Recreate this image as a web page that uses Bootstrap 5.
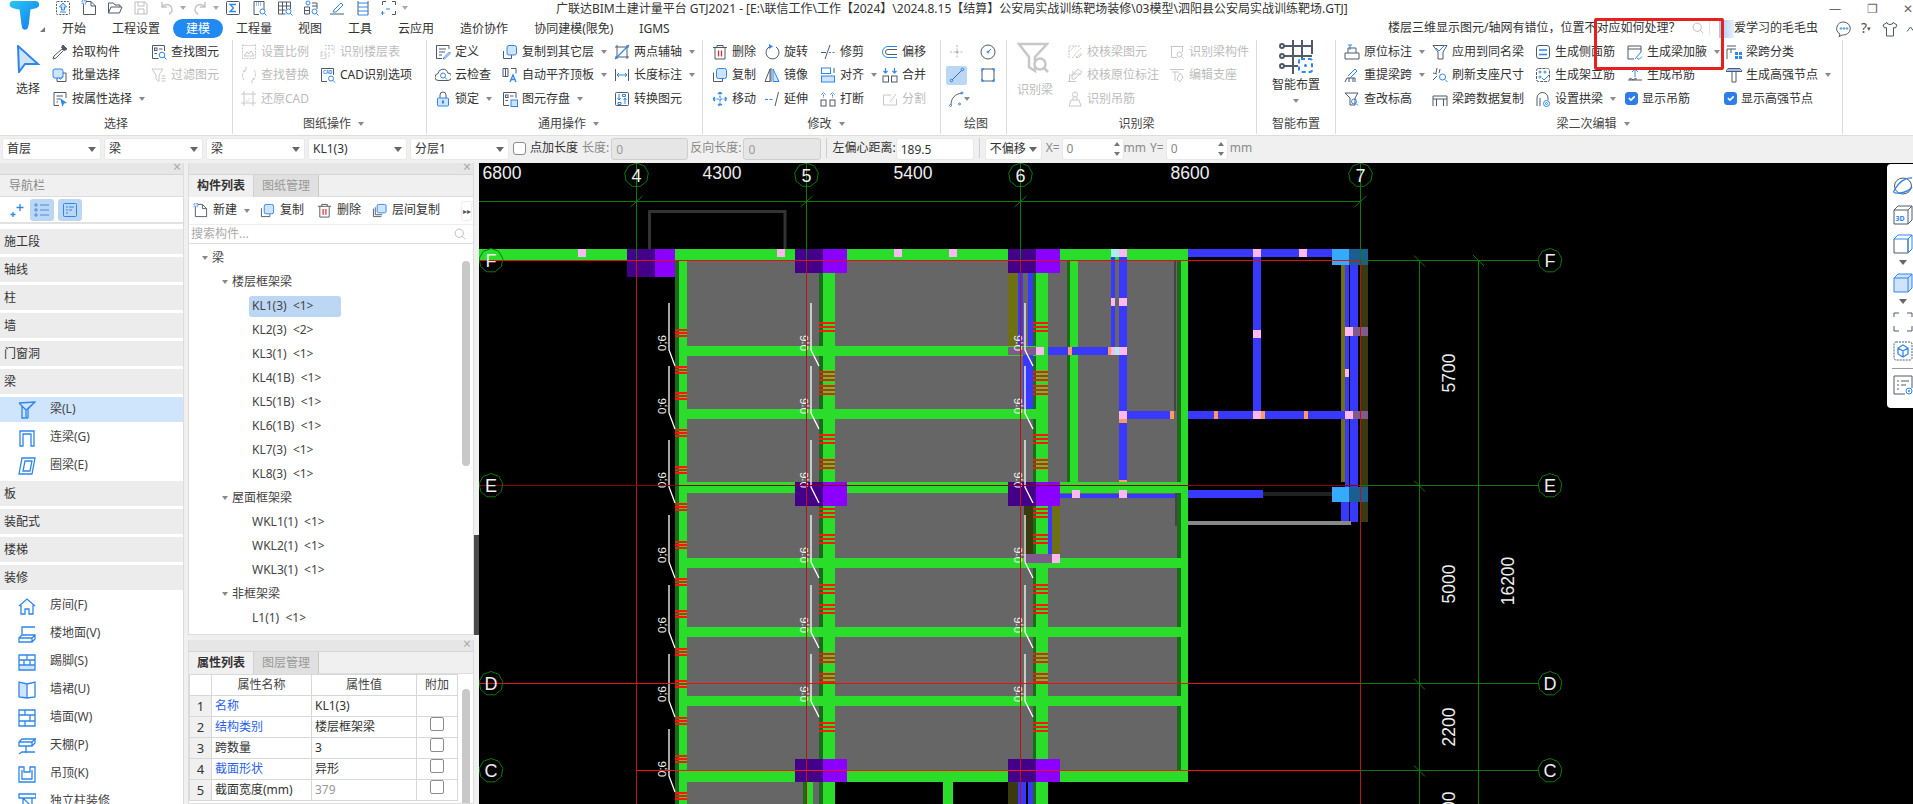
<!DOCTYPE html>
<html lang="zh-CN">
<head>
<meta charset="UTF-8">
<title>广联达BIM土建计量平台 GTJ2021</title>
<link href="https://cdn.jsdelivr.net/npm/bootstrap@5.3.0/dist/css/bootstrap.min.css" rel="stylesheet">
<style>
body{width:1913px;height:804px;overflow:hidden;background:#f0f0f0;font-family:"Noto Sans","Noto Sans CJK SC",sans-serif;font-size:12px;color:#333;line-height:1.2}
.ic{width:16px;height:16px;flex:none;margin-right:4px;fill:none;stroke:var(--base,#4f5b68);stroke-width:1;overflow:visible}
.a{stroke:var(--acc,#2f86ea)}
.af{fill:var(--accf,#cfe3fb);stroke:var(--acc,#2f86ea)}
.r{stroke:#e02b2b}
.dis{--base:#c8c8c8;--acc:#c8c8c8;--accf:#efefef;color:#bcbcbc}
.car{display:inline-block;flex:none;width:0;height:0;border:3.5px solid transparent;border-top:4px solid #8a8a8a;border-bottom:0;margin-left:7px}
/* header */
.app-head{height:38px;background:#fff}
.logo-box{width:49px;position:relative;flex:none}
.logo-box i{position:absolute;left:40px;top:27px;width:0;height:0;border-left:5px solid transparent;border-bottom:5px solid #777}
.t-row{height:19px}
.quick{width:507px;padding-left:6px;margin-top:-3px;flex:none}
.quick .ic{margin-right:10px}
.quick .car{margin:0 6px 0 -5px;border-top-color:#aaa}
.win-ctl{margin-left:auto;width:84px;color:#666}
.tab-it{padding:0 13px;height:19px;line-height:19px;border-radius:10px;color:#333}
.tab-it.on{background:#2089f2;color:#fff}
.srch{width:322px;height:14px;background:#fff;border-right:1px solid #e6e6e6;white-space:nowrap;position:relative;margin-top:2px;line-height:14px}
.srch svg{position:absolute;right:5px;top:1px;width:12px;height:12px;margin:0;stroke:#aaa}
.who{margin-left:9px;width:100px;white-space:nowrap}
.avatar{width:15px;height:18px;background:linear-gradient(90deg,#a5c9f2,#e8f1fb);flex:none}
.hd-tools{margin-left:17px;width:77px;overflow:hidden;flex:none;color:#555}
.hd-tools .ic{margin-right:9px}
.hd-q{width:21px;flex:none;font-size:14px}
.hd-q small{font-size:7px;vertical-align:middle}
.hd-up{width:7px;height:6px;flex:none;margin:0}
/* ribbon */
.ribbon{height:98px;background:#fff;border-bottom:1px solid #ddd;padding-top:2px}
.grp{flex:none;display:flex;flex-direction:column;height:94px;border-right:1px solid #dcdcdc}
.grp-body{height:71px;display:flex}
.grp-lbl{height:23px;line-height:23px;text-align:center;color:#444;display:flex;align-items:center;justify-content:center;padding-top:2px}
.rb-col{display:flex;flex-direction:column;flex:none}
.rb-it{height:23.5px;display:flex;align-items:center;white-space:nowrap}
.rb-big{text-align:center;flex:none}
.rb-big svg{display:block}
.g1{width:233px}.g2{width:194px;padding-left:8px}.g3{width:276px;padding-left:8px}.g4{width:238px;padding-left:9px}.g5{width:66px;padding-left:5px}.g6{width:250px;padding-left:10px}.g7{width:79px}.g8{width:507px;padding-left:8px}
.w52{width:52px}.w56{width:56px}.w62{width:62px}.w67{width:67px}.w79{width:79px}.w88{width:88px}.w92{width:92px}.w99{width:99px}.w102{width:102px}.w103{width:103px}.w112{width:112px}.w50{width:50px}.w31{width:31px}
.sel-big{display:block;margin:5px 0 0 16px;width:24px;height:28px}
.big-cap{display:block;margin:9px 0 0 16px;text-align:left}
.ocr-big{display:block;width:32px;height:33px;margin:2px 0 0 0}
.draw-cell{width:21px;height:19px;display:flex;align-items:center;justify-content:center;margin:2.25px 0;border-radius:2px;position:relative}
.draw-cell .ic{margin:0}
.draw-cell.sel{background:#bcd7f3}
.draw-cell .car{position:absolute;left:18px;top:8px;margin:0}
.ck-box{width:13px;height:13px;margin:0 4px 0 -2px;border-radius:2px;border-color:#2f7ee8;flex:none;float:none}
.form-check-input:checked.ck-box{background-color:#2f7ee8;border-color:#2f7ee8}
/* attribute bar */
.attr-bar{height:27px;background:#f0f0f0;padding:2px 0 0 2px}
.attr-bar .form-select,.attr-bar .form-control{height:22px;min-height:22px;padding:0 4px;font-size:12px;line-height:20px;border-radius:3px;border:1px solid #e8e8e8;color:#333;box-shadow:none}
.attr-bar .form-select{background-size:8px 5px;background-position:right 4px center;padding-right:14px;background-image:url("data:image/svg+xml,%3csvg xmlns='http://www.w3.org/2000/svg' viewBox='0 0 8 5'%3e%3cpath fill='%23666' d='M0 0h8L4 5z'/%3e%3c/svg%3e")}
.attr-bar .form-control:disabled{background:#e6e6e6;border-color:#cfcfcf;color:#999}
.attr-bar .lbl{white-space:nowrap;flex:none;margin-top:3px}
.attr-bar .gl2{margin-left:2px}
.attr-bar .gl4{margin-left:4px}
.s99{width:99px;margin-right:3px;flex:none}
.i77{width:77px;flex:none}.i78{width:78px;flex:none}
.w57{width:57px;flex:none}
.ab-ck{width:13px;height:13px;margin:4px 4px 0 1px;border-radius:2px;flex:none;border-color:#8c8c8c}
.ab-sep{width:1px;height:20px;background:#cfcfcf;margin:0 5px;flex:none}
.grey-l{color:#8a8a8a}
.spin{width:62px;height:22px;background:#fff;border:1px solid #e8e8e8;border-radius:3px;padding-left:4px;line-height:20px;position:relative;flex:none;color:#888}
.spin::before,.spin::after{content:"";position:absolute;right:3px;border:3px solid transparent}
.spin::before{top:3px;border-bottom:4px solid #777;border-top:0}
.spin::after{bottom:3px;border-top:4px solid #777;border-bottom:0}
/* panels */
.work{height:641px;overflow:hidden}
.nav-col{width:184px;background:#fff;border-right:1px solid #ddd;flex:none;overflow:hidden}
.pane-x{height:12px;background:#e6e6e6;border-bottom:1px solid #d5d5d5;position:relative}
.pane-x::after{content:"×";position:absolute;right:2px;top:-4px;font-size:14px;line-height:16px;color:#aaa}
.nav-ttl{height:22px;line-height:22px;background:#f0f0f0;padding-left:9px;color:#888;border-bottom:1px solid #ddd}
.nav-tools{height:27px;border-bottom:2px solid #e2e2e2;padding-left:9px;align-items:center}
.nav-tools .ic{margin:0}
.pill-b{width:24px;height:22px;background:#bcd7f3;border-radius:3px;display:flex;align-items:center;justify-content:center;margin-left:4px}
.nav-tools > .ic + .pill-b{margin-left:5px}
.nav-hd{height:25px;line-height:25px;background:#ececec;margin-bottom:3px;padding-left:4px}
.nav-sub{height:25px;margin-bottom:3px;display:flex;align-items:center;padding-left:18px;color:#444}
.nav-sub.on{background:#cfe5fb}
.nav-sub .ic{width:18px;height:18px;margin-right:14px}
.nav-list{padding-top:5px;background:#fff}
.mid-col{width:286px;margin-left:4px;flex:none}
.pane{background:#fff;border:1px solid #ddd;border-top:0;position:relative;overflow:hidden}
.pane-t{height:472px}.pane-b{height:164px;margin-top:5px}
.pane-tabs{height:22px;background:#f0f0f0;border-bottom:1px solid #ddd;flex-wrap:nowrap}
.pane-tabs .nav-link{width:65px;height:22px;padding:0;text-align:center;line-height:21px;font-size:12px;border-radius:0;color:#999;background:#e0e0e0;border:1px solid #c8c8c8;border-width:0 1px 0 0;margin:0}
.pane-tabs .nav-link.active{color:#333;font-weight:700;background:#f0f0f0;border-color:#d0d0d0}
.pane-bar{height:28px;padding-left:4px;border-bottom:1px solid #eee;align-items:center;position:relative}
.pane-bar .ic{width:15px;height:15px;margin-right:5px}
.mb-it{display:flex;align-items:center;flex:none}
.mb-new{width:67px}.mb-copy{width:57px}.mb-del{width:55px}
.more-b{position:absolute;right:1px;top:4px;width:11px;height:20px;background:#fff;border:1px solid #eee;border-radius:3px;color:#555;font-size:8px;line-height:18px;text-align:center}
.pane-srch{height:19px;line-height:18px;padding-left:2px;color:#aaa;border-bottom:1px solid #ddd;position:relative}
.pane-srch svg{position:absolute;right:7px;top:3px;width:12px;height:12px;margin:0;stroke:#aaa}
.tree{padding-top:2px}
.tree-r{height:24px;line-height:24px;position:relative;color:#444;white-space:pre}
.t0{padding-left:23px}.t1{padding-left:43px}.t2{padding-left:63px}
.t0::before,.t1::before{content:"";position:absolute;top:10px;border:3px solid transparent;border-top:4px solid #888;border-bottom:0}
.t0::before{left:13px}.t1::before{left:33px}
.tree-r.sel::after{content:"";position:absolute;left:60px;top:2px;width:92px;height:21px;background:#bcd7f3;border-radius:3px;z-index:0}
.tree-r span{position:relative;z-index:1}
.sc-th{position:absolute;background:#c8c8c8;width:8px;border-radius:4px}
.sc-a{right:3px;top:98px;height:205px}
.sc-b{right:3px;top:49px;height:120px}
.prop-tb{width:268px;table-layout:fixed;margin:0;font-size:12px;--bs-table-border-color:#d8d8d8;color:#333}
.prop-tb td,.prop-tb th{height:21px;padding:0 3px;font-weight:400;line-height:20px;white-space:nowrap;overflow:hidden;border-color:#d8d8d8}
.prop-tb th{text-align:center;color:#444}
.prop-tb .nr{background:#f0f0f0;text-align:center;font-size:13px;padding:0}
.prop-tb a{color:#2b5ff0;text-decoration:none}
.c1{width:22px}.c2{width:100px}.c3{width:105px}.c4{width:41px}
.tb-ck{display:block;width:14px;height:14px;border:1px solid #8c8c8c;border-radius:2px;margin:0 auto}
.val-g{color:#999}
.split-v{width:5px;flex:none;background:linear-gradient(#f0f0f0 372px,#4a4a4a 372px,#4a4a4a 472px,#f0f0f0 472px)}
.cad{flex:1 1 auto;background:#000;position:relative;overflow:hidden}
.cad svg text{font-family:"Liberation Sans",sans-serif;fill:#eee}
.float-bar{position:absolute;right:0;top:1px;width:26px;height:244px;background:#fff;border-radius:4px 0 0 4px;padding:12px 0 0 6px;overflow:hidden}
.float-bar .ic{display:block;width:20px;height:20px;margin:0 0 9px}
.float-bar .fb-ar{display:block;width:0;height:0;border:4px solid transparent;border-top:5px solid #666;border-bottom:0;margin:-3px 0 8px 6px}
.float-bar hr{margin:-2px 0 6px -1px;width:22px;opacity:1;border-top:1px solid #999}
.mark-box{position:absolute;left:1594px;top:18px;width:130px;height:52px;border:3px solid #e6201c;border-radius:2px;pointer-events:none}
</style>
</head>
<body>

<svg width="0" height="0" class="position-absolute">
<defs>
<linearGradient id="lg" x1="0" y1="0" x2="1" y2="1"><stop offset="0" stop-color="#27c8f2"/><stop offset="1" stop-color="#1577ee"/></linearGradient>
<!-- quick bar -->
<symbol id="q-up" viewBox="0 0 16 16"><rect x="1.5" y="1.5" width="13" height="13" rx="1" stroke-dasharray="2 1.2"/><path class="af" d="M8 3l3.5 4H9.5v3h-3V7H4.500z"/><path class="a" d="M5 12h6"/></symbol>
<symbol id="q-new" viewBox="0 0 16 16"><path d="M4 1.500h6l4.500 4.500v8.500h-12V4"/><path d="M10 1.500v4.500h4.500"/><path class="af" d="M1 0h4v4H1z" stroke-dasharray="1 1"/></symbol>
<symbol id="q-open" viewBox="0 0 16 16"><path d="M1.500 13V3h5l1.500 2h5v2"/><path d="M1.500 13l2.500-6h11l-2.500 6z"/></symbol>
<symbol id="q-save" viewBox="0 0 16 16"><path stroke="#bdbdbd" d="M2 2h10l2 2v10H2zM5 2v4h6V2M5 14V9h6v5"/></symbol>
<symbol id="q-undo" viewBox="0 0 16 16"><path stroke="#c4c4c4" stroke-width="1.400" d="M3 2v5h5M3 7c3-4 10-3 10 3 0 2-1 3-3 4"/></symbol>
<symbol id="q-redo" viewBox="0 0 16 16"><path stroke="#c4c4c4" stroke-width="1.400" d="M13 2v5H8M13 7c-3-4-10-3-10 3 0 2 1 3 3 4"/></symbol>
<symbol id="q-sum" viewBox="0 0 16 16"><rect x="1.500" y="1.500" width="13" height="13" rx="1"/><path class="a" stroke-width="1.300" d="M11 4.500H5L8.500 8 5 11.500h6"/></symbol>
<symbol id="q-calc" viewBox="0 0 16 16"><path d="M3 1.500h10v8M3 1.500v13h5"/><path class="a" d="M5 3h6M5 5h6" stroke-dasharray="1 1"/><circle class="a" cx="11.500" cy="11.500" r="2.500"/><path class="a" d="M13.500 13.500l2 2"/></symbol>
<symbol id="q-grid" viewBox="0 0 16 16"><path d="M1.500 2h12v7M1.500 2v12h7M1.500 6h12M1.500 10h7M5.500 2v12M9.500 2v7"/><circle class="a" cx="11.500" cy="11.500" r="2.500"/><path class="a" d="M13.500 13.500l2 2"/></symbol>
<symbol id="q-grid2" viewBox="0 0 16 16"><path d="M1.500 7h5v7h-5zM9 3h5v6M1.500 10.500h5M9 6h5"/><circle class="a" cx="5" cy="3" r="2"/><circle class="a" cx="11.500" cy="11.500" r="2.500"/><path class="a" d="M13.500 13.500l2 2"/></symbol>
<symbol id="q-pen" viewBox="0 0 16 16"><path d="M1 14h14"/><path class="a" d="M5 10l7-7 2 2-7 7H4z"/></symbol>
<symbol id="q-ladder" viewBox="0 0 16 16"><path d="M3 1v14M13 1v14"/><path class="a" d="M3 3h10M3 7h10M3 11h10M3 15h10"/></symbol>
<symbol id="q-frame" viewBox="0 0 16 16"><path d="M1.500 5V1.500H5M11 1.500h3.500V5M14.500 11v3.500H11"/><path class="a" d="M1.500 11v4M-.5 13h4M5 9h4"/></symbol>
<!-- ribbon -->
<symbol id="i-pick" viewBox="0 0 16 16"><path fill="#4f5b68" d="M11 1l4 4-2.500 1.500-3-3z"/><path d="M10 5l1.500 1.500L4 14l-3 1 1-3z"/></symbol>
<symbol id="i-batch" viewBox="0 0 16 16"><rect class="af" x="1" y="2" width="10" height="9" rx="2"/><path d="M5 11v3.500h9V6h-3"/><path class="a" d="M7 11l1.500 1.500L11 9"/></symbol>
<symbol id="i-attr" viewBox="0 0 16 16"><path d="M14 7V1.500H2v13h5"/><path d="M4.500 5H11M4.500 8H8M4.500 11H6"/><path fill="#2f86ea" stroke="none" d="M8 7l7 5-3 .5L10.500 16z"/></symbol>
<symbol id="i-find" viewBox="0 0 16 16"><path d="M13.500 7V1.500h-12v13h6"/><rect x="3.500" y="4" width="2.500" height="2.500"/><path d="M8 5h3.500M3.500 9.500H6"/><circle class="a" cx="11" cy="11" r="2.800"/><path class="a" d="M13 13l2.500 2.500"/></symbol>
<symbol id="i-filter" viewBox="0 0 16 16"><path d="M1 2h11L8 8v6.500L5 12V8zM10.500 9h4M10.500 11.500h4M10.500 14h4"/></symbol>
<symbol id="i-scale" viewBox="0 0 16 16"><path d="M1.500 1.500h13v13h-13zM1 1h2M13 1h2" stroke-dasharray="2 1"/><path d="M3 12l3-4 2 2 2-3 3 5z"/></symbol>
<symbol id="i-recog" viewBox="0 0 16 16"><path d="M5 1.500h9v9M1 8h5v6.500H1zM1 11h5M9 8v6.500M5 5h9M9 1.500V5" stroke-dasharray="2 1"/></symbol>
<symbol id="i-replace" viewBox="0 0 16 16"><path d="M3 13A7 7 0 0 1 5 2.500M13 3a7 7 0 0 1-2 10.500M5 0v4H1M11 16v-4h4" stroke-dasharray="3 1"/></symbol>
<symbol id="i-cadopt" viewBox="0 0 16 16"><path d="M7 14.500H1.500v-13h12V8"/><text x="3" y="7" font-size="4.500" font-weight="700" fill="#2f86ea" stroke="none">CAD</text><circle class="a" cx="11" cy="11.500" r="2.500"/><path class="a" d="M13 13.500l2 2"/></symbol>
<symbol id="i-restore" viewBox="0 0 16 16"><path d="M3 0v15M12 0v15M0 3h15M0 12h15" /><path d="M5 9l1.500 2L9 7" stroke-dasharray="1 1"/></symbol>
<symbol id="i-def" viewBox="0 0 16 16"><path d="M14 5V1.500H1.500v13H7M4 5h7M4 8h6M4 11h3"/><path class="a" d="M8.500 14l6-6 1 1-6 6H8.500z"/></symbol>
<symbol id="i-cloud" viewBox="0 0 16 16"><path d="M4 13.500A3.500 3.500 0 0 1 3 6.500a5 5 0 0 1 9.800-.5 3.700 3.700 0 0 1 .200 7.500z"/><circle class="a" cx="8" cy="8.500" r="2.500"/><path class="a" d="M10 10.500l2 2"/></symbol>
<symbol id="i-lock" viewBox="0 0 16 16"><path d="M5 7V4a3 3 0 0 1 6 0v3"/><rect class="af" x="2.500" y="7" width="11" height="8" rx="1"/><path class="a" stroke-width="2" d="M8 9.500v3"/></symbol>
<symbol id="i-copyl" viewBox="0 0 16 16"><path d="M1.500 7v7.500h8V11"/><rect class="af" x="5" y="1.500" width="9.500" height="9.500" rx="2"/></symbol>
<symbol id="i-auto" viewBox="0 0 16 16"><path d="M1 1.500h5v8H1zM3.500 1.500v8M9 1.500h5v5"/><path class="a" stroke-width="1.300" d="M8 15l3-7 3 7M9 12.500h4"/></symbol>
<symbol id="i-save" viewBox="0 0 16 16"><path d="M14 7V1.500H1.500v13H7"/><rect x="3.500" y="4" width="2.500" height="2.500"/><path d="M8 5h3.500M3.500 9.500H6"/><rect class="af" x="9" y="9" width="6.500" height="6.500"/></symbol>
<symbol id="i-two" viewBox="0 0 16 16"><path d="M1 3h14M1 13h14M3 1v14M13 1v14"/><path class="a" stroke-width="1.300" d="M1 15L15 1"/></symbol>
<symbol id="i-len" viewBox="0 0 16 16"><path d="M1.500 2v12M14.500 2v12"/><path class="a" d="M3 8h10M5 6L3 8l2 2M11 6l2 2-2 2"/></symbol>
<symbol id="i-conv" viewBox="0 0 16 16"><rect x="1.500" y="1.500" width="13" height="13" rx="1"/><path class="a" d="M5 3v6M3.500 7L5 9l1.500-2M11 13V7M9.500 9L11 7l1.500 2M8.500 3.500h3v2h-3zM4 11.500h3v2H4z"/></symbol>
<symbol id="i-del" viewBox="0 0 16 16"><path d="M1 3.500h14M5 3.500V1.500h6v2M3 3.500v11.500h10V3.500"/><path class="r" stroke-width="1.300" d="M6.500 6.500v6M9.500 6.500v6"/></symbol>
<symbol id="i-copy" viewBox="0 0 16 16"><path d="M1.500 5.500v9h9V12"/><rect class="af" x="4.500" y="1.500" width="10" height="10" rx="2"/></symbol>
<symbol id="i-copy2" viewBox="0 0 16 16"><path d="M1.500 6v8.500H10M3.500 4.500v8H11"/><rect class="af" x="5.500" y="1.500" width="9.500" height="9" rx="1.500"/></symbol>
<symbol id="i-move" viewBox="0 0 16 16"><path class="a" stroke-width="1.200" d="M8 1v14M1 8h14M6 3l2-2 2 2M6 13l2 2 2-2M3 6L1 8l2 2M13 6l2 2-2 2" stroke-dasharray="2.500 1"/></symbol>
<symbol id="i-rot" viewBox="0 0 16 16"><path d="M6 2.500A6.500 6.500 0 1 0 12 3"/><path fill="#2f86ea" stroke="none" d="M5 0l4 2.500-4 2.500z"/></symbol>
<symbol id="i-mir" viewBox="0 0 16 16"><path d="M7 1v14"/><path d="M1 14.500L6 2v12.500z"/><path class="af" d="M9 2l6 12.500H9z"/></symbol>
<symbol id="i-ext" viewBox="0 0 16 16"><path d="M1 8.500h9" stroke-dasharray="3 1.500" class="a"/><path d="M14.500 1L11 15"/></symbol>
<symbol id="i-trim" viewBox="0 0 16 16"><path d="M1 8.500h5"/><path class="a" d="M9 8.500h6" stroke-dasharray="2 1.500"/><path d="M10 1L5 15"/></symbol>
<symbol id="i-albn" viewBox="0 0 16 16"><rect x="1.500" y="1" width="9" height="5.500" class="a"/><rect class="af" x="1.500" y="9" width="13" height="6"/><path d="M14 1v5"/></symbol>
<symbol id="i-break" viewBox="0 0 16 16"><rect x="1" y="9" width="5" height="6"/><rect x="10" y="9" width="5" height="6"/><path class="a" d="M3.500 3.500v3M1.500 3.500L3.500 1.500l2 2M12.500 3.500v3M10.500 3.500l2-2 2 2" stroke-dasharray="2 .5"/></symbol>
<symbol id="i-merge" viewBox="0 0 16 16"><rect x="1" y="9" width="5.500" height="6"/><rect x="9.500" y="9" width="5.500" height="6"/><path class="a" stroke-width="1.200" d="M3.500 1v5M1.500 4l2 2 2-2M12.500 1v5M10.500 4l2 2 2-2"/></symbol>
<symbol id="i-off" viewBox="0 0 16 16"><path class="a" d="M15 2.500H6a5.500 5.500 0 0 0 0 11h9"/><path d="M15 5.500H6a2.500 2.500 0 0 0 0 5h9"/></symbol>
<symbol id="i-split" viewBox="0 0 16 16"><path d="M9 4H1.500v10h13V8M8 11l6-8"/></symbol>
<symbol id="d-pt" viewBox="0 0 16 16"><path d="M8 1v14M1 8h14" stroke-dasharray="2 1.500" stroke="#b4b4b4"/><circle cx="8" cy="8" r="1.300" fill="#b4b4b4" stroke="none"/></symbol>
<symbol id="d-cir" viewBox="0 0 16 16"><circle cx="8" cy="8" r="7"/><path class="a" d="M8 8l3-3"/><circle cx="8" cy="8" r="1" class="a"/></symbol>
<symbol id="d-line" viewBox="0 0 16 16"><path stroke="#2f6fbf" d="M3 13L13 3"/><circle cx="2.500" cy="13.500" r="1.300" class="a"/><circle cx="13.500" cy="2.500" r="1.300" class="a"/></symbol>
<symbol id="d-rect" viewBox="0 0 16 16"><rect x="2" y="2" width="12" height="12" rx="1.500"/><path class="a" stroke-width="1.500" d="M2 4V2h2M12 2h2v2M2 12v2h2M12 14h2v-2"/></symbol>
<symbol id="d-arc" viewBox="0 0 16 16"><path d="M2 14C2 7 6 3 13 2"/><circle cx="1.500" cy="14.500" r="1" class="a"/><circle cx="13" cy="2" r="1" class="a"/><circle cx="10.500" cy="13" r="1" class="a"/></symbol>
<symbol id="g-sel" viewBox="0 0 24 28"><path fill="#cfe3fb" stroke="#2f86ea" stroke-width="2" d="M2 1l20 18H9L3 27z"/></symbol>
<symbol id="g-ocr" viewBox="0 0 32 33"><path fill="none" stroke="#c8c8c8" stroke-width="2.500" d="M2 2h28L18 15v14l-6-4V15z"/><circle fill="#fff" stroke="#c8c8c8" stroke-width="2.500" cx="23" cy="22" r="5.500"/><path stroke="#c8c8c8" stroke-width="2.500" d="M27 26l4 4"/></symbol>
<symbol id="g-ai" viewBox="0 0 34 34"><g fill="none" stroke="#4f5b68" stroke-width="2"><circle cx="3" cy="6" r="2"/><circle cx="3" cy="16" r="2"/><circle cx="3" cy="26" r="2"/><path d="M5 6h28M5 16h28M5 26h14M14 0v34M23 0v20M33 0v14"/></g><rect x="20" y="19" width="13" height="13" rx="2" fill="#fff" stroke="#2f86ea" stroke-width="2" stroke-dasharray="4 3"/><circle cx="26.500" cy="25.500" r="1.500" fill="#2f86ea"/></symbol>
<symbol id="i-chk" viewBox="0 0 16 16"><path d="M2 14V2h12M5 14l9-10M2 8l6-6M9 14l5-5" stroke-dasharray="2 1"/><path d="M9 12l2 2 4-4"/></symbol>
<symbol id="i-chk2" viewBox="0 0 16 16"><path d="M1 14.500h8M2.500 14.500V8H6V4M6 7h8"/><path d="M11 2l4 3-7 7H5V9z"/></symbol>
<symbol id="i-hangd" viewBox="0 0 16 16"><circle cx="8" cy="3.500" r="2.500"/><path d="M2 15l2-6h8l2 6zM6 6v3M10 6v3"/></symbol>
<symbol id="i-rcomp" viewBox="0 0 16 16"><path d="M1.500 2.500h13M2.500 2.500v11H8M13.500 2.500V8"/><circle cx="10.500" cy="10.500" r="2.500"/><path d="M12.500 12.500l2 2"/></symbol>
<symbol id="i-sup" viewBox="0 0 16 16"><path d="M1 2.500h14M3 5h7M6 5v9M11 6l3 4-3 5-3-3z"/></symbol>
<symbol id="b-orig" viewBox="0 0 16 16"><path d="M1 9h14v6H1zM4 9V4h8v5"/><path class="a" d="M4 1h4M6 1v5"/></symbol>
<symbol id="b-apply" viewBox="0 0 16 16"><path d="M1 1.500h14L11 8v7H6V8z"/><path class="a" d="M4 4l3 3 6-6"/></symbol>
<symbol id="b-side" viewBox="0 0 16 16"><rect x="1.500" y="1.500" width="13" height="13" rx="2.500"/><path class="a" stroke-width="1.300" d="M4 6h8M4 10.500h8"/></symbol>
<symbol id="b-hau" viewBox="0 0 16 16"><path d="M1 2h13v6M1 2v13h6M1 5h13"/><path class="a" d="M8 15l6-7"/><path class="a" d="M10 14l2 1.500 3-3"/></symbol>
<symbol id="b-cls" viewBox="0 0 16 16"><path d="M1 15V5h9M1 2h9M5 5v4"/><path fill="#2f86ea" stroke="none" d="M9 8h3v3H9zM13 8h3v3h-3zM9 12h3v3H9zM13 12h3v3h-3z"/></symbol>
<symbol id="b-rep" viewBox="0 0 16 16"><path d="M1 15l2-4h8v4M5 11v4M9 11v4"/><path class="a" d="M4 9l7-7 2 2-7 7"/></symbol>
<symbol id="b-ref" viewBox="0 0 16 16"><path d="M5 1L4 6M1 6l4 1M8 2L7 6M1 13l4-4"/><circle class="a" cx="10.500" cy="10" r="3"/><path class="a" d="M13 12.500l2.500 2.500"/></symbol>
<symbol id="b-frm" viewBox="0 0 16 16"><rect x="1.500" y="1.500" width="13" height="13" rx="2" stroke-dasharray="3 1"/><path class="a" d="M7 11l2 2 5-5"/><circle cx="5" cy="5" r="1" class="a"/><circle cx="10" cy="5" r="1" class="a"/><circle cx="5" cy="10" r="1" class="a"/></symbol>
<symbol id="b-han" viewBox="0 0 16 16"><path d="M1 13h14M3 13v-2l3 2 3-2v2"/><path class="a" d="M8 3v7M5 5l3-3 3 3"/></symbol>
<symbol id="b-str" viewBox="0 0 16 16"><path d="M2 1.500h12l2 3H0zM6 4.500V15h4V4.500"/><path class="a" d="M2 3h12"/></symbol>
<symbol id="b-elv" viewBox="0 0 16 16"><path d="M1 2h13l-3 5v7H6V7z"/><circle class="a" cx="10" cy="10.500" r="2.500"/><path class="a" d="M12 12.500l2 2"/></symbol>
<symbol id="b-cpd" viewBox="0 0 16 16"><path d="M1 15V5h14v10M1 8h14M4.500 8v7M11.500 8v7"/></symbol>
<symbol id="b-arc" viewBox="0 0 16 16"><path d="M2 15V7a5.500 5.500 0 0 1 11 0v2M5 15V7"/><circle class="a" cx="11.500" cy="12.500" r="3"/><circle class="a" cx="11.500" cy="12.500" r="1"/></symbol>
<!-- nav -->
<symbol id="n-sp" viewBox="0 0 16 16"><path class="a" stroke-width="1.300" d="M11 2v7M7.500 5.500h7M4 10v5M1.500 12.500h5"/></symbol>
<symbol id="n-ls" viewBox="0 0 16 16"><path stroke="#4b8de0" d="M6 3h9M6 8h9M6 13h9M1 2h2v2H1zM1 7h2v2H1zM1 12h2v2H1z"/></symbol>
<symbol id="n-tb" viewBox="0 0 16 16"><rect stroke="#2f86ea" x="1.500" y="1.500" width="13" height="13" rx="1"/><path stroke="#2f86ea" d="M4 5h2M7 5h5M4 8h2M7 8h3M4 11h2"/></symbol>
<symbol id="n-beam" viewBox="0 0 18 18"><path class="a" stroke-width="1.300" d="M1 2l16-1-9 8v8h2M4 5v12h3M1 2l7 7M17 1L10 8v9"/></symbol>
<symbol id="n-link" viewBox="0 0 18 18"><path class="a" stroke-width="1.300" d="M2 17V2h14v15h-3V5H5v12z"/></symbol>
<symbol id="n-ring" viewBox="0 0 18 18"><path class="a" stroke-width="1.300" d="M4 1h13l-3 16H1zM7 4h7l-2 10H5z"/></symbol>
<symbol id="n-room" viewBox="0 0 18 18"><path class="a" stroke-width="1.300" d="M1 9l8-7 8 7M3 8v9h4v-5h4v5h4V8"/></symbol>
<symbol id="n-flr" viewBox="0 0 18 18"><path class="a" stroke-width="1.300" d="M4 10V2h13M1 17v-4l3-3h13v4l-3 3zM1 13h13v4M14 13l3-3"/></symbol>
<symbol id="n-skt" viewBox="0 0 18 18"><path fill="#cfe3fb" stroke="none" d="M1.500 12.500h15v4h-15z"/><path class="a" stroke-width="1.300" d="M1 2h16v15H1zM1 7h16M1 12h16M9 2v5M6 7v5M12 7v5"/></symbol>
<symbol id="n-dad" viewBox="0 0 18 18"><path fill="#cfe3fb" stroke="none" d="M1.500 2l7 1.500v13l-7-1z"/><path class="a" stroke-width="1.300" d="M9 3L1 1v15l8 1 8-1V1L9 3zM9 3v14"/></symbol>
<symbol id="n-wal" viewBox="0 0 18 18"><path class="a" stroke-width="1.300" d="M1 1h16v16H1zM1 6h16M1 12h16M7 1v5M12 6v6M7 12v5"/></symbol>
<symbol id="n-cei" viewBox="0 0 18 18"><path class="a" stroke-width="1.300" d="M1 9h13V5l3-3H4L1 5zM1 5h13M14 5l3-3v4l-3 3M8 9v7M1 17l3-2h13"/></symbol>
<symbol id="n-drp" viewBox="0 0 18 18"><path class="a" stroke-width="1.300" d="M1 2h5v5h6V2h5v15H1zM4 5v9h10V5"/></symbol>
<symbol id="n-col" viewBox="0 0 18 18"><path class="a" stroke-width="1.300" d="M1 1h17v4H1zM5 5v13M14 5v13M5 5l9 9"/></symbol>
<!-- float toolbar -->
<symbol id="f-orb" viewBox="0 0 20 20"><ellipse cx="10" cy="10" rx="8.500" ry="8" stroke="#4f5b68"/><path class="a" stroke-width="1.300" d="M19 2C14 1 6 5 1 15c-1 2 2 2.500 6 2s9-2 12-6"/></symbol>
<symbol id="f-3d" viewBox="0 0 20 20"><path d="M1 5h14v14H1zM1 5l4-4h14v14l-4 4M15 5l4-4"/><text x="2.500" y="16" font-size="7" font-weight="700" fill="#2f86ea" stroke="none">3D</text></symbol>
<symbol id="f-cub" viewBox="0 0 20 20"><path d="M1 5v14h14V5"/><path class="a" d="M1 5l4-4h14v14l-4 4V5H1M15 5l4-4"/></symbol>
<symbol id="f-cub2" viewBox="0 0 20 20"><path fill="#cfe3fb" stroke="#2f86ea" d="M1 5h14v14H1zM1 5l4-4h14v14l-4 4M15 5l4-4"/></symbol>
<symbol id="f-dash" viewBox="0 0 20 20"><path d="M1 5V1h5M14 1h5v4M19 14v5h-5M6 19H1v-5"/></symbol>
<symbol id="f-dcu" viewBox="0 0 20 20"><rect x="1" y="1" width="18" height="18" rx="2" stroke-dasharray="2 1"/><path class="a" stroke-width="1.300" d="M10 4l5 3v6l-5 3-5-3V7zM5 7l5 3 5-3M10 10v6"/></symbol>
<symbol id="f-doc" viewBox="0 0 20 20"><path d="M19 13V1H1v18h11M4 6h2M8 6h8M4 10h2M8 10h5M4 14h2"/><circle class="a" cx="16" cy="16" r="3"/><circle cx="16" cy="16" r="1" fill="#2f86ea" stroke="none"/></symbol>
<symbol id="u-chat" viewBox="0 0 16 16"><path d="M8 1a7 6.500 0 0 0-4 12l-1 2.500 3.500-1.500A7 6.500 0 1 0 8 1z"/><circle class="a" cx="5" cy="7.500" r=".8"/><circle class="a" cx="8" cy="7.500" r=".8"/><circle class="a" cx="11" cy="7.500" r=".8"/></symbol>
<symbol id="u-shirt" viewBox="0 0 16 16"><path d="M5 1.500L1 4l1.500 3 2-.5V15h7V6.500l2 .5L15 4l-4-2.500a3 2 0 0 1-6 0z"/></symbol>
<symbol id="u-s" viewBox="0 0 16 16"><circle cx="7" cy="7" r="5.500"/><path d="M11 11l4 4"/></symbol>
</defs>
</svg>

<!-- 标题栏 + 页签 -->
<header class="app-head d-flex">
  <div class="logo-box">
    <svg width="49" height="34"><path fill="url(#lg)" d="M12 1h24a3.500 3.500 0 0 1 1.500 6.500c-2 1-5 1.500-7 2-1 6-1 13-2.500 18-1 3-5 3-6 0-1-5-1.500-12-2.500-18-3-.5-6-.8-8-2A3.500 3.500 0 0 1 12 1z"/></svg>
    <i></i>
  </div>
  <div class="flex-grow-1">
    <div class="t-row d-flex align-items-center">
      <div class="quick d-flex align-items-center">
        <svg class="ic"><use href="#q-up"/></svg>
        <svg class="ic"><use href="#q-new"/></svg>
        <svg class="ic"><use href="#q-open"/></svg>
        <svg class="ic"><use href="#q-save"/></svg>
        <svg class="ic"><use href="#q-undo"/></svg><i class="car"></i>
        <svg class="ic"><use href="#q-redo"/></svg><i class="car"></i>
        <svg class="ic"><use href="#q-sum"/></svg>
        <svg class="ic"><use href="#q-calc"/></svg>
        <svg class="ic"><use href="#q-grid"/></svg>
        <svg class="ic"><use href="#q-grid2"/></svg>
        <svg class="ic"><use href="#q-pen"/></svg>
        <svg class="ic"><use href="#q-ladder"/></svg>
        <svg class="ic"><use href="#q-frame"/></svg>
        <i class="car"></i>
      </div>
      <div class="text-nowrap">广联达BIM土建计量平台 GTJ2021 - [E:\联信工作\工作【2024】\2024.8.15【结算】公安局实战训练靶场装修\03模型\泗阳县公安局实战训练靶场.GTJ]</div>
      <div class="win-ctl d-flex justify-content-between"><span>—</span><span>❐</span><span>✕</span></div>
    </div>
    <div class="t-row d-flex">
      <div class="tab-it">开始</div><div class="tab-it">工程设置</div><div class="tab-it on">建模</div><div class="tab-it">工程量</div><div class="tab-it">视图</div><div class="tab-it">工具</div><div class="tab-it">云应用</div><div class="tab-it">造价协作</div><div class="tab-it">协同建模(限免)</div><div class="tab-it">IGMS</div>
      <div class="srch ms-auto">楼层三维显示图元/轴网有错位，位置不对应如何处理？<svg class="ic"><use href="#u-s"/></svg></div>
      <div class="d-flex align-items-center who"><span class="avatar"></span>爱学习的毛毛虫</div>
      <div class="hd-tools d-flex align-items-center"><svg class="ic"><use href="#u-chat"/></svg><span class="hd-q">?<small>▾</small></span><svg class="ic"><use href="#u-shirt"/></svg><svg class="ic hd-up" viewBox="0 0 7 6"><path d="M0 5.500L3.500 1 7 5.500"/></svg></div>
    </div>
  </div>
</header>

<!-- 功能区 -->
<section class="ribbon d-flex">
  <div class="grp g1">
    <div class="grp-body">
      <div class="rb-big w52"><svg class="sel-big"><use href="#g-sel"/></svg><span class="big-cap">选择</span></div>
      <div class="rb-col w99">
        <div class="rb-it"><svg class="ic"><use href="#i-pick"/></svg>拾取构件</div>
        <div class="rb-it"><svg class="ic"><use href="#i-batch"/></svg>批量选择</div>
        <div class="rb-it"><svg class="ic"><use href="#i-attr"/></svg>按属性选择<i class="car"></i></div>
      </div>
      <div class="rb-col">
        <div class="rb-it"><svg class="ic"><use href="#i-find"/></svg>查找图元</div>
        <div class="rb-it dis"><svg class="ic"><use href="#i-filter"/></svg>过滤图元</div>
      </div>
    </div>
    <div class="grp-lbl">选择</div>
  </div>
  <div class="grp g2">
    <div class="grp-body">
      <div class="rb-col w79">
        <div class="rb-it dis"><svg class="ic"><use href="#i-scale"/></svg>设置比例</div>
        <div class="rb-it dis"><svg class="ic"><use href="#i-replace"/></svg>查找替换</div>
        <div class="rb-it dis"><svg class="ic"><use href="#i-restore"/></svg>还原CAD</div>
      </div>
      <div class="rb-col">
        <div class="rb-it dis"><svg class="ic"><use href="#i-recog"/></svg>识别楼层表</div>
        <div class="rb-it"><svg class="ic"><use href="#i-cadopt"/></svg>CAD识别选项</div>
      </div>
    </div>
    <div class="grp-lbl">图纸操作<i class="car"></i></div>
  </div>
  <div class="grp g3">
    <div class="grp-body">
      <div class="rb-col w67">
        <div class="rb-it"><svg class="ic"><use href="#i-def"/></svg>定义</div>
        <div class="rb-it"><svg class="ic"><use href="#i-cloud"/></svg>云检查</div>
        <div class="rb-it"><svg class="ic"><use href="#i-lock"/></svg>锁定<i class="car"></i></div>
      </div>
      <div class="rb-col w112">
        <div class="rb-it"><svg class="ic"><use href="#i-copyl"/></svg>复制到其它层<i class="car"></i></div>
        <div class="rb-it"><svg class="ic"><use href="#i-auto"/></svg>自动平齐顶板<i class="car"></i></div>
        <div class="rb-it"><svg class="ic"><use href="#i-save"/></svg>图元存盘<i class="car"></i></div>
      </div>
      <div class="rb-col">
        <div class="rb-it"><svg class="ic"><use href="#i-two"/></svg>两点辅轴<i class="car"></i></div>
        <div class="rb-it"><svg class="ic"><use href="#i-len"/></svg>长度标注<i class="car"></i></div>
        <div class="rb-it"><svg class="ic"><use href="#i-conv"/></svg>转换图元</div>
      </div>
    </div>
    <div class="grp-lbl">通用操作<i class="car"></i></div>
  </div>
  <div class="grp g4">
    <div class="grp-body">
      <div class="rb-col w52">
        <div class="rb-it"><svg class="ic"><use href="#i-del"/></svg>删除</div>
        <div class="rb-it"><svg class="ic"><use href="#i-copy"/></svg>复制</div>
        <div class="rb-it"><svg class="ic"><use href="#i-move"/></svg>移动</div>
      </div>
      <div class="rb-col w56">
        <div class="rb-it"><svg class="ic"><use href="#i-rot"/></svg>旋转</div>
        <div class="rb-it"><svg class="ic"><use href="#i-mir"/></svg>镜像</div>
        <div class="rb-it"><svg class="ic"><use href="#i-ext"/></svg>延伸</div>
      </div>
      <div class="rb-col w62">
        <div class="rb-it"><svg class="ic"><use href="#i-trim"/></svg>修剪</div>
        <div class="rb-it"><svg class="ic"><use href="#i-albn"/></svg>对齐<i class="car"></i></div>
        <div class="rb-it"><svg class="ic"><use href="#i-break"/></svg>打断</div>
      </div>
      <div class="rb-col">
        <div class="rb-it"><svg class="ic"><use href="#i-off"/></svg>偏移</div>
        <div class="rb-it"><svg class="ic"><use href="#i-merge"/></svg>合并</div>
        <div class="rb-it dis"><svg class="ic"><use href="#i-split"/></svg>分割</div>
      </div>
    </div>
    <div class="grp-lbl">修改<i class="car"></i></div>
  </div>
  <div class="grp g5">
    <div class="grp-body">
      <div class="rb-col w31">
        <div class="draw-cell"><svg class="ic"><use href="#d-pt"/></svg></div>
        <div class="draw-cell sel"><svg class="ic"><use href="#d-line"/></svg></div>
        <div class="draw-cell"><svg class="ic"><use href="#d-arc"/></svg><i class="car"></i></div>
      </div>
      <div class="rb-col">
        <div class="draw-cell"><svg class="ic"><use href="#d-cir"/></svg></div>
        <div class="draw-cell"><svg class="ic"><use href="#d-rect"/></svg></div>
      </div>
    </div>
    <div class="grp-lbl">绘图</div>
  </div>
  <div class="grp g6">
    <div class="grp-body">
      <div class="rb-big w50 dis"><svg class="ocr-big"><use href="#g-ocr"/></svg><span class="d-block text-start mt-2">识别梁</span></div>
      <div class="rb-col w102 dis">
        <div class="rb-it"><svg class="ic"><use href="#i-chk"/></svg>校核梁图元</div>
        <div class="rb-it"><svg class="ic"><use href="#i-chk2"/></svg>校核原位标注</div>
        <div class="rb-it"><svg class="ic"><use href="#i-hangd"/></svg>识别吊筋</div>
      </div>
      <div class="rb-col dis">
        <div class="rb-it"><svg class="ic"><use href="#i-rcomp"/></svg>识别梁构件</div>
        <div class="rb-it"><svg class="ic"><use href="#i-sup"/></svg>编辑支座</div>
      </div>
    </div>
    <div class="grp-lbl">识别梁</div>
  </div>
  <div class="grp g7">
    <div class="grp-body justify-content-center">
      <div class="rb-big"><svg width="34" height="34" class="d-block mx-auto"><use href="#g-ai"/></svg><span class="d-block mt-1">智能布置</span><i class="car ms-0"></i></div>
    </div>
    <div class="grp-lbl">智能布置</div>
  </div>
  <div class="grp g8">
    <div class="grp-body">
      <div class="rb-col w88">
        <div class="rb-it"><svg class="ic"><use href="#b-orig"/></svg>原位标注<i class="car"></i></div>
        <div class="rb-it"><svg class="ic"><use href="#b-rep"/></svg>重提梁跨<i class="car"></i></div>
        <div class="rb-it"><svg class="ic"><use href="#b-elv"/></svg>查改标高</div>
      </div>
      <div class="rb-col w103">
        <div class="rb-it"><svg class="ic"><use href="#b-apply"/></svg>应用到同名梁</div>
        <div class="rb-it"><svg class="ic"><use href="#b-ref"/></svg>刷新支座尺寸</div>
        <div class="rb-it"><svg class="ic"><use href="#b-cpd"/></svg>梁跨数据复制</div>
      </div>
      <div class="rb-col w92">
        <div class="rb-it"><svg class="ic"><use href="#b-side"/></svg>生成侧面筋</div>
        <div class="rb-it"><svg class="ic"><use href="#b-frm"/></svg>生成架立筋</div>
        <div class="rb-it"><svg class="ic"><use href="#b-arc"/></svg>设置拱梁<i class="car"></i></div>
      </div>
      <div class="rb-col w99">
        <div class="rb-it"><svg class="ic"><use href="#b-hau"/></svg>生成梁加腋<i class="car"></i></div>
        <div class="rb-it"><svg class="ic"><use href="#b-han"/></svg>生成吊筋</div>
        <div class="rb-it"><input class="form-check-input ck-box" type="checkbox" checked>显示吊筋</div>
      </div>
      <div class="rb-col">
        <div class="rb-it"><svg class="ic"><use href="#b-cls"/></svg>梁跨分类</div>
        <div class="rb-it"><svg class="ic"><use href="#b-str"/></svg>生成高强节点<i class="car"></i></div>
        <div class="rb-it"><input class="form-check-input ck-box" type="checkbox" checked>显示高强节点</div>
      </div>
    </div>
    <div class="grp-lbl">梁二次编辑<i class="car"></i></div>
  </div>
</section>

<!-- 属性工具条 -->
<section class="attr-bar d-flex align-items-start">
  <select class="form-select s99"><option>首层</option></select>
  <select class="form-select s99"><option>梁</option></select>
  <select class="form-select s99"><option>梁</option></select>
  <select class="form-select s99"><option>KL1(3)</option></select>
  <select class="form-select s99"><option>分层1</option></select>
  <input class="form-check-input ab-ck" type="checkbox">
  <span class="lbl">点加长度</span>
  <span class="lbl grey-l gl4">长度:</span>
  <input class="form-control i77 gl2" disabled value="0">
  <span class="lbl grey-l gl2">反向长度:</span>
  <input class="form-control i78 gl2" disabled value="0">
  <span class="ab-sep"></span>
  <span class="lbl">左偏心距离:</span>
  <input class="form-control i78" value="189.5">
  <span class="ab-sep"></span>
  <select class="form-select w57"><option>不偏移</option></select>
  <span class="lbl grey-l gl4">X=</span>
  <span class="spin gl2">0</span>
  <span class="lbl grey-l">mm</span>
  <span class="lbl grey-l gl4">Y=</span>
  <span class="spin gl2">0</span>
  <span class="lbl grey-l gl2">mm</span>
</section>

<main class="work d-flex position-relative">
  <!-- 导航栏 -->
  <aside class="nav-col">
    <div class="pane-x"></div>
    <div class="nav-ttl">导航栏</div>
    <div class="nav-tools d-flex">
      <svg class="ic"><use href="#n-sp"/></svg>
      <span class="pill-b"><svg class="ic"><use href="#n-ls"/></svg></span>
      <span class="pill-b"><svg class="ic"><use href="#n-tb"/></svg></span>
    </div>
    <div class="nav-list">
      <div class="nav-hd">施工段</div>
      <div class="nav-hd">轴线</div>
      <div class="nav-hd">柱</div>
      <div class="nav-hd">墙</div>
      <div class="nav-hd">门窗洞</div>
      <div class="nav-hd">梁</div>
      <div class="nav-sub on"><svg class="ic"><use href="#n-beam"/></svg>梁(L)</div>
      <div class="nav-sub"><svg class="ic"><use href="#n-link"/></svg>连梁(G)</div>
      <div class="nav-sub"><svg class="ic"><use href="#n-ring"/></svg>圈梁(E)</div>
      <div class="nav-hd">板</div>
      <div class="nav-hd">装配式</div>
      <div class="nav-hd">楼梯</div>
      <div class="nav-hd">装修</div>
      <div class="nav-sub"><svg class="ic"><use href="#n-room"/></svg>房间(F)</div>
      <div class="nav-sub"><svg class="ic"><use href="#n-flr"/></svg>楼地面(V)</div>
      <div class="nav-sub"><svg class="ic"><use href="#n-skt"/></svg>踢脚(S)</div>
      <div class="nav-sub"><svg class="ic"><use href="#n-dad"/></svg>墙裙(U)</div>
      <div class="nav-sub"><svg class="ic"><use href="#n-wal"/></svg>墙面(W)</div>
      <div class="nav-sub"><svg class="ic"><use href="#n-cei"/></svg>天棚(P)</div>
      <div class="nav-sub"><svg class="ic"><use href="#n-drp"/></svg>吊顶(K)</div>
      <div class="nav-sub"><svg class="ic"><use href="#n-col"/></svg>独立柱装修</div>
    </div>
  </aside>

  <!-- 构件列表 / 属性列表 -->
  <div class="mid-col">
    <div class="pane pane-t">
      <div class="pane-x"></div>
      <ul class="nav pane-tabs">
        <li><a class="nav-link active" href="#">构件列表</a></li>
        <li><a class="nav-link" href="#">图纸管理</a></li>
      </ul>
      <div class="pane-bar d-flex">
        <div class="mb-it mb-new"><svg class="ic"><use href="#q-new"/></svg>新建<i class="car"></i></div>
        <div class="mb-it mb-copy"><svg class="ic"><use href="#i-copy"/></svg>复制</div>
        <div class="mb-it mb-del"><svg class="ic"><use href="#i-del"/></svg>删除</div>
        <div class="mb-it"><svg class="ic"><use href="#i-copy2"/></svg>层间复制</div>
        <span class="more-b">▸▸</span>
      </div>
      <div class="pane-srch">搜索构件...<svg class="ic"><use href="#u-s"/></svg></div>
      <div class="tree">
        <div class="tree-r t0"><span>梁</span></div>
        <div class="tree-r t1"><span>楼层框架梁</span></div>
        <div class="tree-r t2 sel"><span>KL1(3)  &lt;1&gt;</span></div>
        <div class="tree-r t2"><span>KL2(3)  &lt;2&gt;</span></div>
        <div class="tree-r t2"><span>KL3(1)  &lt;1&gt;</span></div>
        <div class="tree-r t2"><span>KL4(1B)  &lt;1&gt;</span></div>
        <div class="tree-r t2"><span>KL5(1B)  &lt;1&gt;</span></div>
        <div class="tree-r t2"><span>KL6(1B)  &lt;1&gt;</span></div>
        <div class="tree-r t2"><span>KL7(3)  &lt;1&gt;</span></div>
        <div class="tree-r t2"><span>KL8(3)  &lt;1&gt;</span></div>
        <div class="tree-r t1"><span>屋面框架梁</span></div>
        <div class="tree-r t2"><span>WKL1(1)  &lt;1&gt;</span></div>
        <div class="tree-r t2"><span>WKL2(1)  &lt;1&gt;</span></div>
        <div class="tree-r t2"><span>WKL3(1)  &lt;1&gt;</span></div>
        <div class="tree-r t1"><span>非框架梁</span></div>
        <div class="tree-r t2"><span>L1(1)  &lt;1&gt;</span></div>
      </div>
      <div class="sc-th sc-a"></div>
    </div>
    <div class="pane pane-b">
      <div class="pane-x"></div>
      <ul class="nav pane-tabs">
        <li><a class="nav-link active" href="#">属性列表</a></li>
        <li><a class="nav-link" href="#">图层管理</a></li>
      </ul>
      <table class="table table-bordered prop-tb">
        <colgroup><col class="c1"><col class="c2"><col class="c3"><col class="c4"></colgroup>
        <thead><tr><th></th><th>属性名称</th><th>属性值</th><th>附加</th></tr></thead>
        <tbody>
          <tr><td class="nr">1</td><td><a href="#">名称</a></td><td>KL1(3)</td><td></td></tr>
          <tr><td class="nr">2</td><td><a href="#">结构类别</a></td><td>楼层框架梁</td><td><span class="tb-ck"></span></td></tr>
          <tr><td class="nr">3</td><td>跨数量</td><td>3</td><td><span class="tb-ck"></span></td></tr>
          <tr><td class="nr">4</td><td><a href="#">截面形状</a></td><td>异形</td><td><span class="tb-ck"></span></td></tr>
          <tr><td class="nr">5</td><td>截面宽度(mm)</td><td class="val-g">379</td><td><span class="tb-ck"></span></td></tr>
        </tbody>
      </table>
      <div class="sc-th sc-b"></div>
    </div>
  </div>
  <div class="split-v"></div>

  <!-- 绘图区 -->
  <div class="cad">
    <svg id="plan" width="1435" height="641" viewBox="478 163 1435 641" class="d-block">
      <g shape-rendering="crispEdges" id="beams">
        <!-- 房间底色 -->
        <path fill="#666" d="M686 260H1176V804H686z"/>
        <path fill="#000" d="M834 782H1176V804H834z"/>
        <!-- 暗绿 -->
        <path fill="#1a6b1a" d="M674 249h4v555h-4zM818 272h4v532h-4zM1032 272h3v532h-3zM1066 260h3v222h-3zM1176 260h4v522h-4zM802 782h3v22h-3z"/>
        <!-- 绿色梁 -->
        <path fill="#2bdd2b" d="M478 249H1187V260H478zM678 249h8v555h-8zM822 260h12v544h-12zM1035 260h12v544h-12zM1069 260h8v222h-8zM1180 249h7v533h-7zM686 771H1187V782H686z"/>
        <path fill="#2bdd2b" d="M686 346H1035V355.500H686zM686 409H1035V419H686zM686 482H1187V493H686zM686 558H1187V568H686zM686 627H1187V637H686zM686 696H1187V706H686zM805 782h7v22h-7zM942 782h10v22h-10z"/>
        <!-- 橄榄 / 蓝 -->
        <path fill="#6f6f14" d="M1007 272h10v74h-10zM1340 265h8v146h-8zM1340 419h8v63h-8zM1051 505h8v49h-8zM1340 502h8v6h-8z"/>
        <path fill="#3a3a10" d="M1359 265h8v257h-8zM1023 505h9v49h-9zM1007 782h10v22h-10z"/>
        <path fill="#3838ff" d="M1017 272h5v74h-5zM1027 272h5v74h-5zM1022 355h10v54h-10zM1187 249h145v8h-145zM1252 257h8v162h-8zM1187 411h158v8h-158zM1126 411h47v8h-47zM1118 249h8v233h-8zM1110 249h4v102h-4zM1047 347h71v8h-71zM1349 260h8v262h-8zM1344 260h4v262h-4zM1059 494h117v4h-117zM1187 490h75v8h-75zM1047 505h4v49h-4zM1017 782h8v22h-8zM1027 782h5v22h-5z"/>
        <path fill="#3838ff" d="M1340 502h8v20h-8z"/>
        <path fill="#222" d="M1262 492h69v4h-69z"/>
        <path fill="#888" d="M1187 521h163v4h-163z"/>
        <path fill="#444" d="M1174 493h2v33h-2zM1173 261h2v150h-2z"/>
        <!-- 柱帽 -->
        <path fill="#36aaff" d="M1331 249h17v16h-17zM1331 487h17v15h-17z"/>
        <path fill="#1a5f8f" d="M1348 249h19v16h-19zM1348 487h19v15h-19z"/>
        <path fill="#440088" d="M626 249h28v28h-28zM794 249h28v24h-28zM1007 249h28v24h-28zM794 482h28v24h-28zM1007 482h28v24h-28zM794 759h28v23h-28zM1007 759h28v23h-28z"/>
        <path fill="#8b00ff" d="M654 249h20v28h-20zM822 249h24v24h-24zM1035 249h24v24h-24zM822 482h24v24h-24zM1035 482h24v24h-24zM822 759h24v23h-24zM1035 759h24v23h-24z"/>
        <!-- 节点 -->
        <path fill="#805a8a" d="M1352 327h15v9h-15zM1352 411h15v8h-15zM1007 347h28v8h-28zM1023 554h28v9h-28z"/>
        <path fill="#ffb8f2" d="M577 249h8v8h-8zM776 249h8v8h-8zM893 249h8v8h-8zM948 249h8v8h-8zM1118 249h8v8h-8zM1252 249h8v8h-8zM1298 249h8v8h-8zM1118 298h8v8h-8zM1110 298h4v8h-4zM1252 330h8v8h-8zM1344 327h8v9h-8zM1344 369h4v8h-4zM1118 347h8v8h-8zM1035 347h8v8h-8zM1110 347h4v8h-4zM1118 411h8v8h-8zM1252 411h8v8h-8zM1344 411h8v8h-8zM1071 490h8v8h-8zM1118 490h8v8h-8zM1051 554h8v9h-8z"/>
        <path fill="#aaeeee" d="M1110 249h8v8h-8zM1114 347h4v8h-4z"/>
        <path fill="#ff9966" d="M1067 347h4v8h-4zM1107 347h3v8h-3zM1118 419h8v4h-8zM1169 411h4v8h-4zM1213 411h4v8h-4zM1260 411h4v8h-4zM1303 411h4v8h-4zM1118 480h8v2h-8z"/>
      </g>
      <path fill="none" stroke="#333" stroke-width="3" d="M648.500 249V211.500H784V249"/>
      <g id="rebar"></g>
      <g id="axes" shape-rendering="crispEdges"></g>
      <g id="glyphs"></g>
    </svg>
    <div class="float-bar">
      <svg class="ic"><use href="#f-orb"/></svg>
      <svg class="ic"><use href="#f-3d"/></svg>
      <svg class="ic"><use href="#f-cub"/></svg>
      <i class="fb-ar"></i>
      <svg class="ic"><use href="#f-cub2"/></svg>
      <i class="fb-ar"></i>
      <svg class="ic"><use href="#f-dash"/></svg>
      <svg class="ic"><use href="#f-dcu"/></svg>
      <hr>
      <svg class="ic"><use href="#f-doc"/></svg>
    </div>
  </div>
</main>

<div class="mark-box"></div>

<script src="https://cdn.jsdelivr.net/npm/bootstrap@5.3.0/dist/js/bootstrap.bundle.min.js"></script>
<script>
  // 画布上重复的钢筋、引线、轴线
  const rebar = document.getElementById('rebar');
  const axes = document.getElementById('axes');
  const glyphs = document.getElementById('glyphs');

  // 箍筋加密区
  const stirrups = [
    {x: 674, w: 12, gap: 3, ys: [332,369,395,432,469,506,544,581,613,651,683,720,758,795]},
    {x: 818, w: 16, gap: 4, ys: [326,375,389,438,463,512,538,588,608,657,677,726]},
    {x: 1032, w: 15, gap: 4, ys: [326,375,389,438,463,512,538,588,608,657,677,726]}
  ];
  let html = '';
  stirrups.forEach(s => s.ys.forEach(y => {
    for (let i = -1; i <= 1; i++) {
      html += `<rect x="${s.x}" y="${Math.round(y + i * s.gap)}" width="${s.w}" height="2" fill="#ff1414" shape-rendering="crispEdges"/>`;
    }
  }));

  // 0;6 引线
  const leaders = [
    {x: 668, ex: 674, tx: 661, starts: [303,366,440,515,585,654,729]},
    {x: 810, ex: 818, tx: 803, starts: [303,366,440,515,585,654]},
    {x: 1024, ex: 1032, tx: 1017, starts: [303,366,440,515,585,654]}
  ];
  leaders.forEach(l => l.starts.forEach(y => {
    html += `<path d="M${l.x} ${y}V${y + 47}L${l.ex} ${y + 63}" fill="none" stroke="#fff" stroke-width="1.300"/>`;
    html += `<text transform="translate(${l.tx + 4} ${y + 40}) rotate(-90)" text-anchor="middle" font-size="11.500">0;6</text>`;
  }));
  rebar.innerHTML = html;

  // 轴线
  const GREEN = '#0a7a0a';
  const line = (x1, y1, x2, y2, c) => `<line x1="${x1}" y1="${y1}" x2="${x2}" y2="${y2}" stroke="${c}"/>`;
  html = '';
  html += line(478, 201.5, 1359, 201.5, GREEN);
  [635.5, 805.5, 1019.5, 1359.5].forEach(x => {
    html += line(x, 163, x, 260, GREEN);
    html += line(x, 260, x, 804, '#b81414');
  });
  html += line(1418.5, 260, 1418.5, 804, GREEN);
  html += line(1477.5, 260, 1477.5, 804, GREEN);
  html += line(478, 260.5, 1359, 260.5, '#e01010');
  html += line(478, 485.5, 1359, 485.5, '#8b0000');
  html += line(478, 683.5, 1359, 683.5, '#e81010');
  html += line(635, 770.5, 1359, 770.5, '#ff1010');
  [260.5, 485.5, 683.5, 770.5].forEach(y => { html += line(1359, y, 1537, y, GREEN); });
  axes.innerHTML = html;

  // 轴号圈 + 刻度 + 尺寸
  html = '';
  const tick = (x1, y1, x2, y2) => `<line x1="${x1}" y1="${y1}" x2="${x2}" y2="${y2}" stroke="${GREEN}"/>`;
  [635.5, 805.5, 1019.5, 1359.5].forEach(x => { html += tick(x - 6, 207, x + 6, 196); });
  [260.5, 485.5, 683.5, 770.5].forEach(y => { html += tick(1413, y - 5, 1424, y + 6); });
  html += tick(1472, 255, 1483, 266);

  const bubble = (cx, cy, t) => {
    let pts = [];
    for (let i = 0; i < 9; i++) {
      const a = -Math.PI / 2 + i * 2 * Math.PI / 9;
      pts.push((cx + 12 * Math.cos(a)).toFixed(1) + ',' + (cy + 12 * Math.sin(a)).toFixed(1));
    }
    return `<polygon points="${pts.join(' ')}" fill="none" stroke="${GREEN}"/>` +
      `<text x="${cx}" y="${cy + 6.500}" text-anchor="middle" font-size="18">${t}</text>`;
  };
  [[635.5,'4'],[805.5,'5'],[1019.5,'6'],[1359.5,'7']].forEach(a => { html += bubble(a[0], 175, a[1]); });
  [[260.5,'F'],[485.5,'E'],[683.5,'D'],[770.5,'C']].forEach(a => {
    html += bubble(490, a[0], a[1]);
    html += bubble(1549, a[0], a[1]);
  });
  [[501,'6800'],[721,'4300'],[912,'5400'],[1189,'8600']].forEach(a => {
    html += `<text x="${a[0]}" y="178.500" text-anchor="middle" font-size="17.500">${a[1]}</text>`;
  });
  [[1454,373,'5700'],[1454,584,'5000'],[1513,581,'16200'],[1454,727,'2200'],[1454,811,'2900']].forEach(a => {
    html += `<text transform="translate(${a[0]} ${a[1]}) rotate(-90)" text-anchor="middle" font-size="17.500">${a[2]}</text>`;
  });
  glyphs.innerHTML = html;
</script>
</body>
</html>
